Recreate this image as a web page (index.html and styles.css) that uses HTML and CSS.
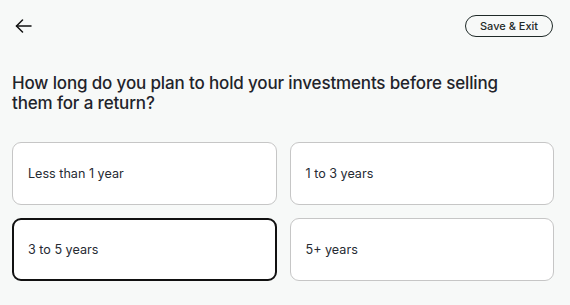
FILE: index.html
```html
<!DOCTYPE html>
<html lang="en">
<head>
    <meta charset="UTF-8">
    <meta name="viewport" content="width=device-width, initial-scale=1.0">
    <title>Investment horizon</title>
    <link rel="stylesheet" href="styles.css">
</head>
<body>
    <div class="topbar">
        <a class="back" href="#" aria-label="Back">
            <svg width="17" height="14" viewBox="0 0 17 14" fill="none" stroke="#111" stroke-width="1.5" stroke-linecap="round" stroke-linejoin="round">
                <path d="M16 7H1.5"/>
                <path d="M7.5 1L1.5 7l6 6"/>
            </svg>
        </a>
        <button class="save-exit">Save &amp; Exit</button>
    </div>

    <h1 class="question">How long do you plan to hold your investments before selling them for a return?</h1>

    <div class="options">
        <button class="option">Less than 1 year</button>
        <button class="option">1 to 3 years</button>
        <button class="option selected">3 to 5 years</button>
        <button class="option">5+ years</button>
    </div>
</body>
</html>
```

FILE: styles.css
```css
body {
    margin: 0;
    padding: 0 16px 0 12px;
    background: #f7f9f8;
    font-family: Inter, "Noto Sans", sans-serif;
    color: #1f242b;
}

.topbar {
    display: flex;
    justify-content: space-between;
    align-items: center;
    padding: 14px 1px 0 3px;
    height: 23px;
}

.back {
    display: flex;
    align-items: center;
    margin-top: 1px;
}

.save-exit {
    font-family: inherit;
    font-size: 11px;
    font-weight: 500;
    color: #1f2a28;
    background: transparent;
    border: 1px solid #1f2a28;
    border-radius: 11px;
    height: 22px;
    width: 88px;
    padding: 0;
    cursor: pointer;
}

.question {
    font-size: 17px;
    font-weight: 500;
    line-height: 20px;
    margin: 36px 0 0;
    max-width: 510px;
    letter-spacing: -0.15px;
}

.options {
    display: grid;
    grid-template-columns: 1fr 1fr;
    gap: 13px;
    margin-top: 29px;
}

.option {
    font-family: inherit;
    font-size: 12.6px;
    color: #262b33;
    text-align: left;
    background: #fff;
    border: 1px solid #c6c6c6;
    border-radius: 9px;
    height: 63px;
    padding: 0 15px;
    cursor: pointer;
}

.option.selected {
    border: 2px solid #111;
    padding: 0 14px;
}
```
